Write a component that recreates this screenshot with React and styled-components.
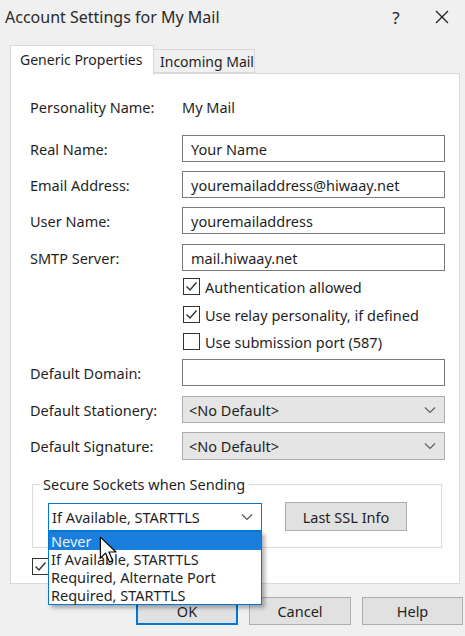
import React from 'react';
import styled, { createGlobalStyle } from 'styled-components';

const Global = createGlobalStyle`
  html, body { margin: 0; padding: 0; background: #f0f0f0; }
  body { font-family: "Noto Sans", "Open Sans", sans-serif; color: #1f1f1f; }
  * { box-sizing: border-box; }
`;

const FS = '14.5px';

const Window = styled.div`
  width: 465px;
  height: 636px;
  background: #f0f0f0;
  display: flex;
  flex-direction: column;
  overflow: hidden;
  position: relative;
`;

const TitleBar = styled.div`
  height: 36px;
  display: flex;
  align-items: center;
  padding-left: 5px;
`;

const Title = styled.div`
  flex: 1;
  font-size: 16px;
  color: #2a2a2a;
  margin-top: -2px;
`;

const CaptionButton = styled.div`
  width: 46px;
  height: 34px;
  display: flex;
  align-items: center;
  justify-content: center;
  font-size: 17px;
  color: #222;
  margin-top: -2px;
`;

const TabStrip = styled.div`
  display: flex;
  align-items: flex-end;
  height: 30px;
  margin-top: 9px;
  padding-left: 10px;
  margin-bottom: -2px;
  position: relative;
  z-index: 2;
`;

const Tab = styled.div`
  height: ${p => (p.$active ? '30px' : '24px')};
  width: ${p => p.$w}px;
  margin-bottom: ${p => (p.$active ? '0' : '2px')};
  background: ${p => (p.$active ? '#ffffff' : '#f0f0f0')};
  border: 1px solid #d9d9d9;
  border-bottom: ${p => (p.$active ? 'none' : '1px solid #d9d9d9')};
  border-left: ${p => (p.$active ? '1px solid #d9d9d9' : 'none')};
  display: flex;
  align-items: ${p => (p.$active ? 'flex-start' : 'center')};
  padding-top: ${p => (p.$active ? '4px' : '0')};
  padding-left: ${p => (p.$active ? '9px' : '6px')};
  font-size: 14px;
  color: #1f1f1f;
  white-space: nowrap;
`;

const Panel = styled.div`
  margin: 0 5px 0 10px;
  height: 511px;
  background: #ffffff;
  border: 1px solid #d9d9d9;
  padding-left: 19px;
  display: flex;
  flex-direction: column;
  position: relative;
  z-index: 1;
`;

const Row = styled.div`
  display: grid;
  grid-template-columns: 152px 263px;
  align-items: center;
  margin-top: ${p => p.$mt}px;
  height: ${p => p.$h}px;
`;

const Label = styled.div`
  font-size: ${FS};
  color: #1f1f1f;
  white-space: nowrap;
`;

const Value = styled.div`
  font-size: ${FS};
  color: #1f1f1f;
`;

const TextBox = styled.div`
  height: 100%;
  border: 1px solid #7a7a7a;
  background: #fff;
  display: flex;
  align-items: center;
  padding-left: 8px;
  font-size: ${FS};
  color: #1f1f1f;
  white-space: nowrap;
`;

const Select = styled.div`
  height: 100%;
  border: 1px solid #adadad;
  background: #e5e5e5;
  display: flex;
  align-items: center;
  justify-content: space-between;
  padding: 0 8px 0 6px;
  font-size: ${FS};
  color: #1f1f1f;
  white-space: nowrap;
`;

const Chevron = ({ color = '#606060' }) => (
  <svg width="12" height="8" viewBox="0 0 12 8">
    <polyline points="1,1.5 6,6.5 11,1.5" fill="none" stroke={color} strokeWidth="1.2" />
  </svg>
);

const CheckRow = styled.div`
  display: flex;
  align-items: center;
  margin-top: ${p => p.$mt}px;
  margin-left: ${p => p.$ml}px;
  height: 17px;
  font-size: ${FS};
  color: #1f1f1f;
  gap: 5px;
  white-space: nowrap;
`;

const Box = styled.div`
  width: 17px;
  height: 17px;
  border: 1px solid #333;
  background: #fff;
  display: flex;
  align-items: center;
  justify-content: center;
  flex-shrink: 0;
`;

const Check = ({ checked }) => (
  <Box>
    {checked && (
      <svg width="13" height="11" viewBox="0 0 13 11">
        <polyline points="1.5,5.5 5,9 11.5,1.5" fill="none" stroke="#333" strokeWidth="1.4" />
      </svg>
    )}
  </Box>
);

const Group = styled.fieldset`
  margin: 14px 0 0 2px;
  width: 410px;
  border: 1px solid #dcdcdc;
  padding: 8px 0 16px 15px;
  display: flex;
  align-items: center;
`;

const Legend = styled.legend`
  font-size: ${FS};
  color: #1f1f1f;
  padding: 0 3px;
  margin-left: -8px;
  line-height: 20px;
`;

const GroupContent = styled.div`
  display: flex;
  align-items: center;
`;

const ComboWrap = styled.div`
  position: relative;
  width: 214px;
  height: 28px;
  margin-top: 1px;
`;

const Combo = styled.div`
  height: 100%;
  border: 1px solid #0078d7;
  background: #fff;
  display: flex;
  align-items: center;
  justify-content: space-between;
  padding: 0 8px 0 3px;
  font-size: ${FS};
  color: #1f1f1f;
  white-space: nowrap;
`;

const List = styled.div`
  position: absolute;
  top: 28px;
  left: 0;
  width: 214px;
  background: #fff;
  border: 1px solid #0078d7;
  box-shadow: 3px 3px 4px rgba(0, 0, 0, 0.3);
  z-index: 10;
  display: flex;
  flex-direction: column;
`;

const Item = styled.div`
  height: 18px;
  line-height: 18px;
  padding-left: 2px;
  font-size: ${FS};
  background: ${p => (p.$selected ? '#1a7fdc' : '#fff')};
  color: ${p => (p.$selected ? '#e8f2fc' : '#1f1f1f')};
  white-space: nowrap;
`;

const Cursor = styled.svg`
  position: absolute;
  left: 51px;
  top: 33px;
  z-index: 11;
`;

const Button = styled.div`
  width: ${p => p.$w}px;
  height: ${p => p.$h}px;
  margin-left: ${p => p.$ml || 0}px;
  background: #e1e1e1;
  border: ${p => (p.$default ? '2px solid #0078d7' : '1px solid #adadad')};
  display: flex;
  align-items: center;
  justify-content: center;
  font-size: ${FS};
  color: #1f1f1f;
`;

const ButtonRow = styled.div`
  display: flex;
  justify-content: flex-end;
  gap: 11px;
  margin-top: 13px;
  padding-right: 2px;
`;

export default function App() {
  return (
    <>
      <Global />
      <Window>
        <TitleBar>
          <Title>Account Settings for My Mail</Title>
          <CaptionButton>?</CaptionButton>
          <CaptionButton>
            <svg width="14" height="14" viewBox="0 0 14 14">
              <path d="M1 1 L13 13 M13 1 L1 13" stroke="#222" strokeWidth="1.3" />
            </svg>
          </CaptionButton>
        </TitleBar>

        <TabStrip>
          <Tab $active $w={144}>Generic Properties</Tab>
          <Tab $w={101}>Incoming Mail</Tab>
        </TabStrip>

        <Panel>
          <Row $mt={23} $h={20}>
            <Label>Personality Name:</Label>
            <Value>My Mail</Value>
          </Row>
          <Row $mt={18} $h={27}>
            <Label>Real Name:</Label>
            <TextBox>Your Name</TextBox>
          </Row>
          <Row $mt={9} $h={27}>
            <Label>Email Address:</Label>
            <TextBox>youremailaddress@hiwaay.net</TextBox>
          </Row>
          <Row $mt={9} $h={27}>
            <Label>User Name:</Label>
            <TextBox>youremailaddress</TextBox>
          </Row>
          <Row $mt={10} $h={27}>
            <Label>SMTP Server:</Label>
            <TextBox>mail.hiwaay.net</TextBox>
          </Row>
          <CheckRow $mt={7} $ml={153}>
            <Check checked />
            Authentication allowed
          </CheckRow>
          <CheckRow $mt={11} $ml={153}>
            <Check checked />
            Use relay personality, if defined
          </CheckRow>
          <CheckRow $mt={10} $ml={153}>
            <Check />
            Use submission port (587)
          </CheckRow>
          <Row $mt={9} $h={27}>
            <Label>Default Domain:</Label>
            <TextBox />
          </Row>
          <Row $mt={10} $h={27}>
            <Label>Default Stationery:</Label>
            <Select>
              &lt;No Default&gt;
              <Chevron />
            </Select>
          </Row>
          <Row $mt={9} $h={28}>
            <Label>Default Signature:</Label>
            <Select>
              &lt;No Default&gt;
              <Chevron />
            </Select>
          </Row>

          <Group>
            <Legend>Secure Sockets when Sending</Legend>
            <GroupContent>
              <ComboWrap>
                <Combo>
                  If Available, STARTTLS
                  <Chevron color="#555" />
                </Combo>
                <List>
                  <Item $selected>Never</Item>
                  <Item>If Available, STARTTLS</Item>
                  <Item>Required, Alternate Port</Item>
                  <Item>Required, STARTTLS</Item>
                </List>
                <Cursor width="19" height="29" viewBox="0 0 16 25">
                  <path
                    d="M1 1 L1 19 L5.5 14.8 L8.8 22.5 L11.6 21.3 L8.4 13.8 L14.5 13.8 Z"
                    fill="#fff"
                    stroke="#000"
                    strokeWidth="1"
                    strokeLinejoin="round"
                  />
                </Cursor>
              </ComboWrap>
              <Button $w={122} $h={29} $ml={23}>Last SSL Info</Button>
            </GroupContent>
          </Group>

          <CheckRow $mt={10} $ml={2}>
            <Check checked />
          </CheckRow>
        </Panel>

        <ButtonRow>
          <Button $w={102} $h={28} $default>OK</Button>
          <Button $w={102} $h={28}>Cancel</Button>
          <Button $w={101} $h={28}>Help</Button>
        </ButtonRow>
      </Window>
    </>
  );
}
